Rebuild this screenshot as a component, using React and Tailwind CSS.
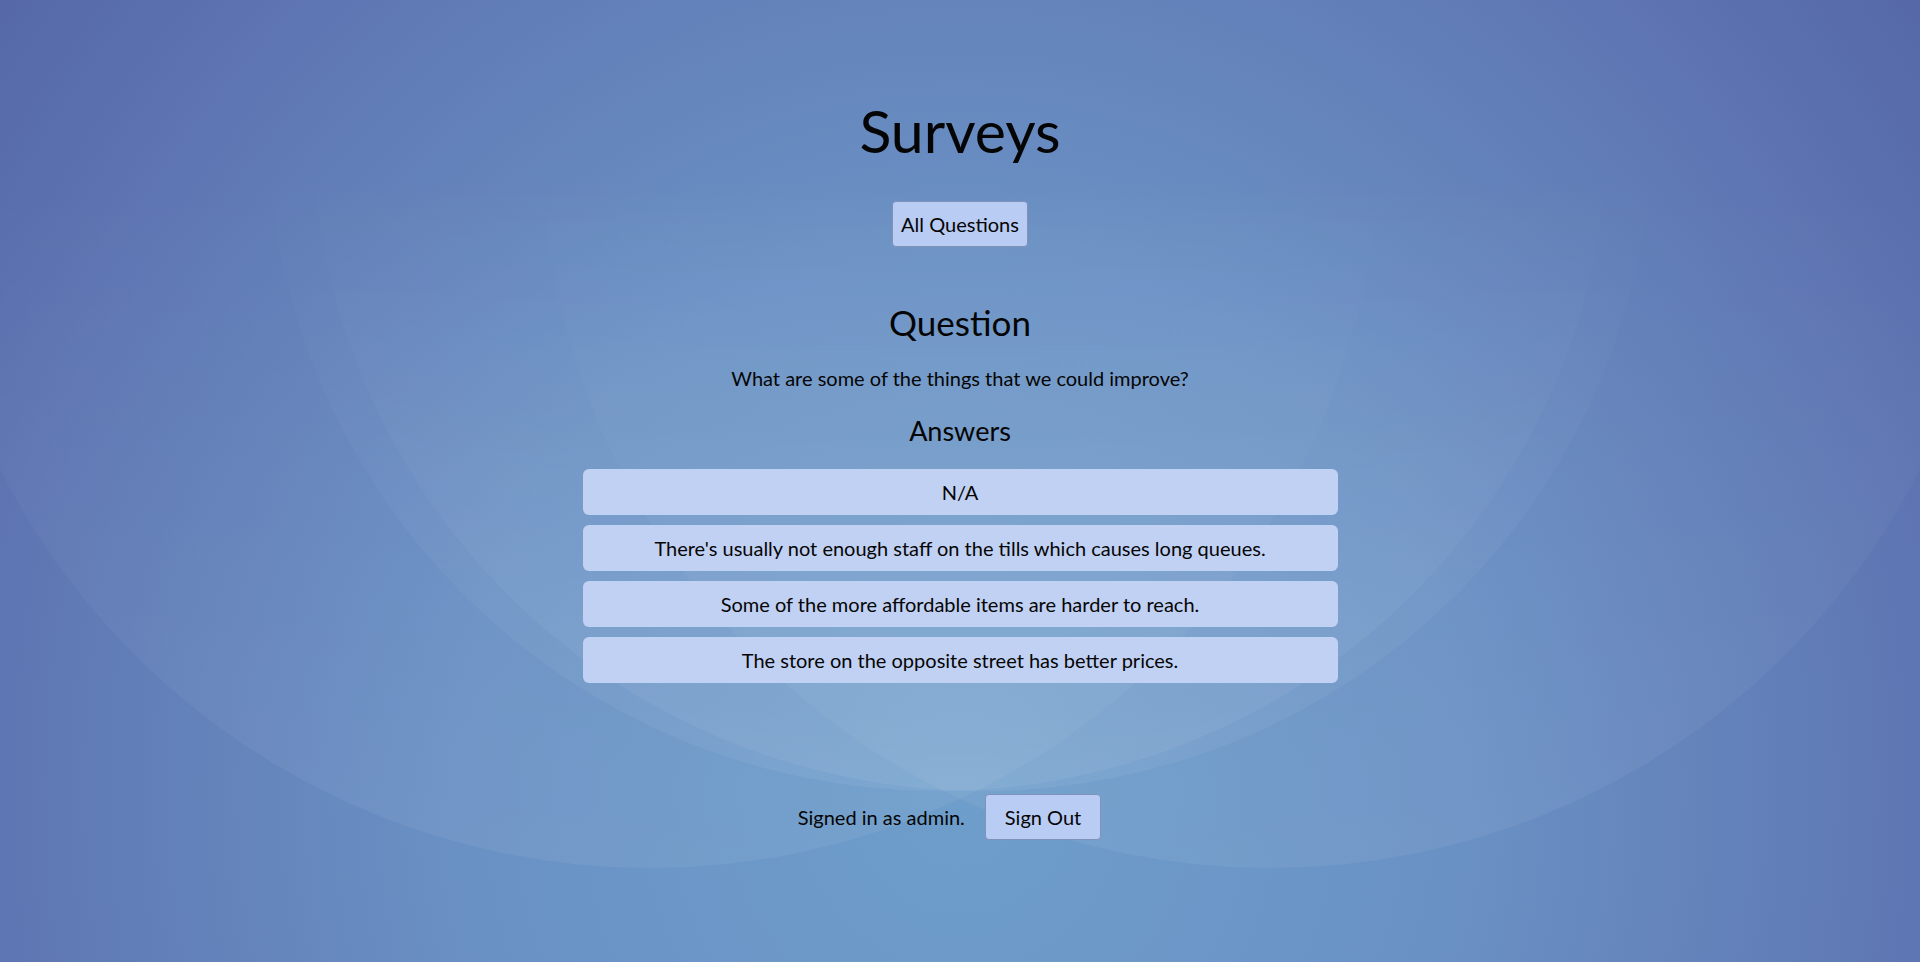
import React from "react";

const answers = [
  "N/A",
  "There's usually not enough staff on the tills which causes long queues.",
  "Some of the more affordable items are harder to reach.",
  "The store on the opposite street has better prices.",
];

const circle =
  "pointer-events-none absolute rounded-full bg-[linear-gradient(to_bottom,transparent_52%,rgba(255,255,255,0.055)_100%)]";

export default function App() {
  return (
    <div
      className="relative min-h-[962px] w-full overflow-hidden text-[#050505] bg-[radial-gradient(ellipse_65%_140%_at_50%_82%,#6e9ecb_0%,#6a91c4_40%,#5f78b4_75%,#5465a6_100%)]"
      style={{ fontFamily: "Lato, 'Noto Sans', sans-serif" }}
    >
      {/* decorative background circles */}
      <div className={`${circle} left-[-79px] top-[-590px] h-[1458px] w-[1458px]`} />
      <div className={`${circle} left-[541px] top-[-590px] h-[1458px] w-[1458px]`} />
      <div className={`${circle} left-[267px] top-[-551px] h-[1342px] w-[1342px]`} />
      <div className={`${circle} left-[311px] top-[-551px] h-[1342px] w-[1342px]`} />

      <main className="relative flex flex-col items-center pt-[95px]">
        <h1 className="text-[59px] leading-[72px] font-normal">Surveys</h1>

        <button className="mt-[34px] flex h-[46px] items-center rounded-[4px] border border-[#8192b8] bg-[#b9ccf3] px-[8px] text-[20px]">
          All Questions
        </button>

        <h2 className="mt-[54px] text-[35px] leading-[42px] font-normal">Question</h2>

        <p className="mt-[23px] text-[20px] leading-[24px]">
          What are some of the things that we could improve?
        </p>

        <h3 className="mt-[25px] text-[27px] leading-[32px] font-normal">Answers</h3>

        <div className="mt-[22px] flex w-[755px] flex-col gap-[10px]">
          {answers.map((a) => (
            <div
              key={a}
              className="flex h-[46px] items-center justify-center rounded-[6px] bg-[#c1d1f3] text-[20px]"
            >
              {a}
            </div>
          ))}
        </div>

        <div className="mt-[111px] flex items-center gap-[20px] pr-[21px]">
          <span className="text-[20px]">Signed in as admin.</span>
          <button className="flex h-[46px] items-center rounded-[4px] border border-[#8192b8] bg-[#b9ccf3] px-[19px] text-[20px]">
            Sign Out
          </button>
        </div>
      </main>
    </div>
  );
}
